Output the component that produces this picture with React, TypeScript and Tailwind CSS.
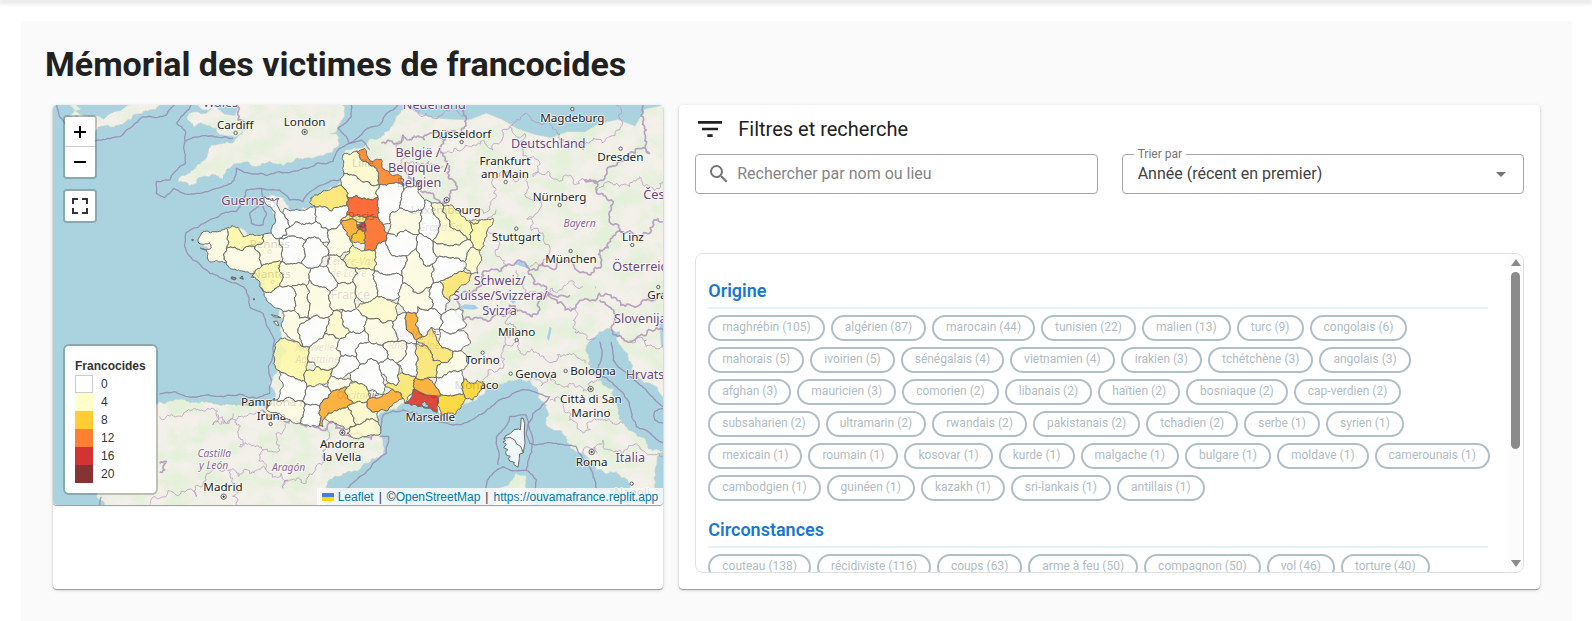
import React from "react";

type Pt = [number, number];

/* ---------- geometry helpers ---------- */

function parse(s: string): Pt[] {
  return s
    .trim()
    .split(/\s+/)
    .map((p) => p.split(",").map(Number) as Pt);
}

function hash(a: number, b: number): number {
  const v = Math.sin(a * 12.9898 + b * 78.233) * 43758.5453;
  return v - Math.floor(v) - 0.5;
}

/* Subdivides a segment with a displacement that is the same in both directions. */
function roughen(a: Pt, b: Pt, depth: number, amount: number): Pt[] {
  const dx = b[0] - a[0];
  const dy = b[1] - a[1];
  const len = Math.hypot(dx, dy);
  if (depth === 0 || len < 7) return [a];
  const sign = a[0] < b[0] || (a[0] === b[0] && a[1] < b[1]) ? 1 : -1;
  const off = hash(a[0] + b[0], a[1] + b[1]) * amount * sign;
  const m: Pt = [(a[0] + b[0]) / 2 - dy * off, (a[1] + b[1]) / 2 + dx * off];
  return [...roughen(a, m, depth - 1, amount), ...roughen(m, b, depth - 1, amount)];
}

function toPath(pts: Pt[], closed: boolean, amount: number): string {
  const out: Pt[] = [];
  const n = closed ? pts.length : pts.length - 1;
  for (let i = 0; i < n; i++) {
    out.push(...roughen(pts[i], pts[(i + 1) % pts.length], 4, amount));
  }
  if (!closed) out.push(pts[pts.length - 1]);
  return "M" + out.map((p) => p[0].toFixed(1) + " " + p[1].toFixed(1)).join("L") + (closed ? "Z" : "");
}

/* Merges nearby vertices and adds missing ones along shared edges. */
function weld(shapes: Pt[][], tol: number): Pt[][] {
  const nodes: Pt[] = [];
  const snap = (p: Pt): Pt => {
    let best: Pt | null = null;
    let bd = tol;
    for (const q of nodes) {
      const d = Math.hypot(p[0] - q[0], p[1] - q[1]);
      if (d < bd) {
        bd = d;
        best = q;
      }
    }
    if (best) return best;
    nodes.push(p);
    return p;
  };
  const snapped = shapes.map((s) => {
    const r = s.map(snap);
    return r.filter((p, i) => p !== r[(i + 1) % r.length]);
  });
  return snapped.map((s) => {
    const out: Pt[] = [];
    s.forEach((a, i) => {
      const b = s[(i + 1) % s.length];
      out.push(a);
      const dx = b[0] - a[0];
      const dy = b[1] - a[1];
      const l2 = dx * dx + dy * dy;
      nodes
        .filter((q) => !s.includes(q))
        .map((q) => ({ q, t: ((q[0] - a[0]) * dx + (q[1] - a[1]) * dy) / l2 }))
        .filter(({ q, t }) => t > 0.05 && t < 0.95 && Math.hypot(a[0] + dx * t - q[0], a[1] + dy * t - q[1]) < 9)
        .sort((u, v) => u.t - v.t)
        .forEach(({ q }) => out.push(q));
    });
    return out;
  });
}

/* ---------- départements ---------- */

const W = "#ffffff";
const C0 = "#fffde4";
const C1 = "#fffacb";
const C2 = "#fff9a6";
const Y = "#fde568";
const G = "#fdd422";
const O = "#ffa51c";
const D = "#ff7b15";
const R = "#ff4f14";

const departments: [string, string][] = [
  [D, "290,33 315,25 325,55 340,65 350,58 365,58 368,85 388,95 395,105 425,108 428,135 400,130 360,135 357,115 350,85 330,75 302,58"],
  [C1, "290,33 302,58 330,75 350,85 357,115 360,135 330,128 300,118 270,105 252,100 252,70 252,42"],
  [C0, "252,100 270,105 300,118 330,128 360,135 355,172 320,178 262,170 260,150 245,135"],
  [Y, "150,188 165,165 200,152 245,135 260,150 262,170 262,195 240,200 215,213 205,205 180,198"],
  [R, "262,170 320,178 355,172 355,232 320,232 262,225 262,195"],
  [W, "355,172 360,135 400,130 428,135 432,152 425,180 420,205 398,215 392,250 370,255 355,232"],
  [W, "432,152 470,140 480,125 475,155 495,180 495,200 485,210 450,215 420,205 425,180"],
  [C0, "398,215 420,205 450,215 485,210 485,240 480,280 455,280 440,270 410,290 385,280 392,250"],
  [W, "485,210 495,180 515,188 520,205 530,230 540,260 530,290 520,305 500,290 480,280 485,240"],
  [C1, "515,188 550,195 560,230 570,260 600,270 632,300 600,315 560,315 520,305 530,290 540,260 530,230"],
  [C2, "550,195 580,198 610,230 662,240 655,250 630,247 640,270 632,300 600,270 570,260 560,230"],
  [C2, "662,240 700,235 690,260 675,300 662,330 640,320 632,300 640,270 630,247"],
  [C1, "640,320 662,330 660,370 655,400 635,402 615,365"],
  [C0, "520,305 560,315 600,315 632,300 640,320 615,365 580,352 535,352 520,330"],
  [W, "480,280 500,290 520,305 520,330 535,352 518,372 500,380 480,345 470,325 470,300"],
  [W, "385,280 410,290 440,270 455,280 480,280 470,300 470,325 438,348 410,350 380,315"],
  ["#ff6216", "320,232 355,232 370,255 385,280 380,300 355,310 350,325 315,332 315,310 318,270"],
  [Y, "260,225 290,225 320,234 312,248 285,240 245,238"],
  [O, "245,238 285,240 292,255 298,267 278,285 272,302 262,285 250,260"],
  ["#fdbb13", "298,267 317,275 318,300 312,315 278,310 278,285"],
  [W, "165,198 205,205 215,213 240,200 262,195 260,225 245,238 235,260 205,270 185,262 170,230"],
  [W, "75,205 100,210 165,198 170,230 170,245 140,250 90,262 85,240 70,220"],
  [W, "15,170 25,178 58,175 55,200 70,220 85,240 90,262 78,268 82,285 62,295 42,290 48,240 30,200"],
  [W, "90,262 140,250 170,245 185,262 205,270 210,305 190,308 165,290 140,300 65,295 82,285 78,268"],
  [C0, "205,270 235,260 245,238 250,260 262,285 272,302 280,315 270,335 240,350 205,345 200,320 210,305"],
  [C2, "280,315 315,332 350,325 345,360 345,392 310,385 285,385 260,378 248,360 270,335"],
  [W, "350,325 355,310 380,300 385,315 410,350 438,348 435,380 428,408 380,405 345,392 345,360"],
  [C0, "438,348 470,325 480,345 500,380 518,372 515,410 520,430 490,455 460,455 430,430 428,408 435,380"],
  [W, "518,372 535,352 580,352 615,365 612,393 580,405 540,425 520,425 515,410"],
  [Y, "540,425 580,405 612,393 625,405 600,440 575,465 570,485 550,450"],
  [W, "520,425 540,425 550,450 570,485 560,515 545,525 515,505 508,470 515,440"],
  [W, "65,295 140,300 130,320 125,370 90,372 68,365 68,330"],
  [W, "140,300 165,290 190,308 200,320 205,345 180,378 155,385 125,370 130,320"],
  [C0, "10,285 35,280 65,295 68,330 68,365 35,370 5,380 0,340 -15,320 12,305"],
  [C2, "-100,265 -65,262 -50,290 -20,282 10,285 12,305 -15,320 -50,332 -100,325"],
  [C0, "-100,265 -135,275 -180,290 -182,310 -150,308 -145,324 -178,324 -155,342 -150,365 -130,360 -100,370 -108,345 -100,325"],
  [C0, "-100,325 -50,332 -15,320 0,340 5,380 -15,398 -70,390 -95,372 -108,345"],
  [C2, "5,380 35,370 68,365 60,390 68,420 60,437 35,458 0,440 -5,420 -25,412"],
  [C0, "68,365 90,372 125,370 155,385 150,420 140,438 95,440 60,437 68,420 60,390"],
  [W, "155,385 200,378 215,400 235,430 212,455 185,440 150,420"],
  [C0, "205,345 240,350 260,378 285,385 295,400 280,425 235,430 215,400 200,378"],
  [C0, "285,385 310,385 345,392 350,440 350,470 315,490 290,470 280,425 295,400"],
  [W, "345,392 380,405 428,408 430,430 420,450 420,470 380,478 350,470 350,440"],
  [C0, "430,430 460,455 490,455 512,448 508,470 515,505 475,500 470,520 440,518 415,490 420,470 420,450"],
  [C0, "235,430 280,425 290,470 290,505 250,508 225,512 210,500 212,455"],
  [W, "0,445 35,458 60,437 95,440 105,480 105,512 70,515 30,490"],
  [C0, "95,440 140,438 145,480 150,500 150,538 120,535 105,512 105,480"],
  [C0, "140,438 150,425 185,440 212,455 210,500 225,512 205,532 150,538 150,500 145,480"],
  [C0, "65,515 105,512 120,535 150,538 115,570 125,600 130,620 110,605 78,580 65,550"],
  [W, "125,550 150,538 205,532 200,565 175,600 150,622 130,620 125,600 115,570"],
  [C1, "205,532 225,512 245,520 250,555 270,575 240,598 195,582 200,565"],
  [W, "245,512 290,505 318,530 315,570 270,575 250,555 245,530"],
  [C1, "290,505 315,490 350,470 380,478 415,490 415,525 400,545 350,535 318,530"],
  [C0, "318,535 350,535 400,545 408,575 415,605 370,615 330,605 315,570"],
  [W, "400,545 415,525 440,518 440,565 470,600 470,612 440,608 415,605 408,575"],
  [O, "440,518 468,518 468,555 488,590 470,600 440,565"],
  [W, "470,520 475,500 515,505 545,525 540,570 515,562 488,590 468,555"],
  [W, "545,530 580,508 610,510 622,555 595,570 540,570"],
  [W, "540,570 595,570 625,585 632,610 605,632 570,630 535,605"],
  [Y, "470,600 488,590 515,562 535,605 570,630 575,655 545,668 520,662 515,640 495,615"],
  [Y, "470,612 495,615 515,640 520,662 545,668 530,690 530,712 500,715 468,712 475,660"],
  [W, "470,612 475,660 468,712 430,700 412,670 440,640 445,610"],
  [C0, "370,615 415,605 445,610 440,640 412,660 385,655"],
  [C0, "530,690 545,668 575,655 580,635 605,640 625,670 605,690 560,705 530,712"],
  [W, "530,712 560,705 605,690 612,715 605,735 612,762 545,765 532,745 525,735"],
  [G, "612,708 640,730 670,725 665,750 640,780 612,768 605,735"],
  [G, "535,767 600,762 618,775 605,800 585,825 545,825 533,795"],
  [O, "468,712 500,715 530,730 535,767 500,765 465,747"],
  [Y, "375,735 412,735 414,705 468,712 465,747 435,788 425,762 400,748"],
  [O, "322,800 330,775 370,765 400,748 425,762 430,775 360,812 330,808"],
  [W, "355,670 385,655 412,670 414,705 412,735 385,728 365,700"],
  [W, "270,700 300,675 335,655 355,670 365,700 375,735 370,765 325,752 275,720"],
  [W, "290,650 300,610 330,605 370,615 385,655 355,670 335,655 300,675"],
  [W, "240,598 270,575 315,570 330,605 300,610 290,650 245,648 230,625"],
  [C0, "150,622 175,600 195,582 240,598 230,625 245,648 220,685 175,680 145,662"],
  [C2, "62,595 85,600 130,620 150,630 145,662 140,690 135,722 100,710 60,693"],
  [W, "60,693 100,710 135,722 142,740 128,783 50,780"],
  [C2, "140,690 175,680 220,685 205,725 165,740 142,740 135,722"],
  [W, "220,685 245,648 290,650 300,675 270,700 245,715 215,708"],
  [C0, "215,708 245,715 275,720 262,742 215,757 205,740 205,725"],
  [W, "142,740 165,740 205,740 215,757 205,775 180,798 150,795 128,783"],
  [C0, "30,788 50,780 128,783 135,810 122,850 95,845 60,820 20,808"],
  [W, "128,783 150,795 180,798 178,820 185,830 178,858 150,860 122,850 135,810"],
  [O, "180,798 215,757 262,750 264,775 282,790 225,812 195,835 190,860 176,862 185,830 178,820"],
  [C2, "262,742 290,725 325,752 322,785 282,790 262,770"],
  [C1, "200,837 225,812 262,800 280,830 290,855 258,868 230,850"],
  [C1, "262,800 282,790 322,785 330,808 360,812 355,845 290,855 280,830"],
  [C1, "262,880 290,862 290,855 355,845 358,885 320,890"],
];

const shapes = weld(
  departments.map(([, s]) => parse(s)),
  11
);

/* ---------- base map ---------- */

const lands = [
  "60,15 95,25 60,48 100,55 110,80 135,97 200,75 250,45 300,30 330,15",
  "440,15 490,22 470,40 412,52 430,80 480,75 510,105 560,110 590,85 560,115 520,130 485,135 465,180 440,200 385,245 420,258 450,232 490,222 520,238 545,200 575,190 620,200 660,185 680,192 760,178 825,165 865,140 870,112 840,100 870,70 885,40 880,15",
  "1065,15 1040,50 1010,95 990,115 920,145 885,155 880,220 860,265 790,300 800,325 720,330 690,290 650,290 670,340 690,410 600,410 530,385 450,410 480,485 560,510 640,530 640,580 690,630 695,700 690,800 675,910 655,927 610,920 560,918 470,905 375,900 330,905 60,915 50,1000 150,1130 165,1215 840,1215 830,1160 880,1120 950,1090 1000,1035 985,1000 985,950 1065,905 1120,910 1160,930 1215,945 1280,900 1300,885 1380,840 1440,842 1480,905 1490,960 1550,1010 1600,1060 1640,1110 1700,1115 1740,1165 1790,1215 1842,1215 1842,1055 1770,1010 1720,970 1700,910 1650,840 1615,790 1610,740 1635,712 1710,695 1700,715 1722,750 1745,790 1785,850 1842,900 1842,15",
  "1332,1165 1360,1160 1400,1118 1430,1130 1440,1175 1440,1215 1330,1215",
];

const countryBorders = [
  "560,15 565,60 590,75",
  "995,130 1060,105 1100,112 1140,100 1185,120",
  "1240,15 1245,80 1190,95 1185,120 1180,160 1200,200 1215,270 1192,305 1175,320",
  "1060,200 1110,250 1150,280 1175,320",
  "1780,15 1785,80 1800,160 1790,150 1740,160 1680,200 1605,240 1640,275 1680,335 1725,400 1760,410 1800,400 1842,365",
  "1725,400 1650,450 1655,500 1600,515 1520,505 1440,510 1370,498 1300,515 1290,560 1225,630 1240,660",
  "1240,660 1330,650 1380,615 1430,640 1465,640 1490,590 1560,585",
  "1440,510 1490,560 1500,590 1600,600 1700,595 1780,600 1842,570",
  "1650,600 1700,650 1690,695 1760,715 1842,695",
  "640,930 700,960 770,980 810,985 880,985 900,1010 985,1005",
  "330,1090 350,1085 345,1110 330,1115",
];

const regionBorders = [
  "330,950 400,945 440,930 500,945 520,970 560,960 600,940 640,930",
  "560,960 565,1000 570,1040 640,1050 690,1050 720,970",
  "500,945 490,975 530,970 550,940",
  "640,1050 650,1110 700,1165 760,1150 800,1100 820,1050 825,985",
  "300,1215 330,1195 440,1190 470,1140 540,1110 600,1120 650,1110",
  "540,1110 570,1170 560,1215",
  "1100,15 1110,45 1180,40 1240,50",
  "1060,105 1040,140 1060,200 1120,190 1180,200",
  "1380,80 1430,40 1500,60 1530,120 1600,150 1680,110 1700,15",
  "1180,160 1260,140 1330,150 1380,80 1420,150 1450,230 1540,230 1605,240",
  "1280,330 1340,290 1350,220 1420,230 1460,300 1480,400 1440,500",
  "1340,330 1320,400 1350,470 1370,498",
  "1640,275 1700,250 1770,230 1842,240",
  "1400,510 1420,560 1480,580 1540,560 1600,560",
  "1360,745 1400,720 1430,760 1490,780 1560,760 1610,790",
  "1380,640 1400,690 1360,745 1300,840",
  "1440,842 1500,830 1560,850 1620,870 1650,840",
  "1500,900 1560,950 1600,1000 1660,960 1720,970",
  "1600,1060 1660,1020 1720,1060 1842,1070",
  "1560,620 1570,680 1620,720 1640,712",
  "1740,720 1790,740 1842,735",
];

const maritime = [
  "20,15 30,50 60,80 135,122 210,110 280,50 350,45 375,15",
  "425,15 380,70 408,95 408,190 360,240 320,245 320,280 345,293 372,265 420,283 470,275 500,265 545,250 560,205 610,222 690,215 760,205 850,185 870,145 900,130 935,120 960,150",
  "408,125 450,110 550,115",
  "905,15 905,50 865,85 900,130 990,75 1045,15",
  "870,240 830,250 790,270 760,305 720,300 690,270 635,265 590,270 560,335 480,360 408,400 405,440 430,480 480,520 540,545 590,570 600,620 640,640 660,690 675,720 660,880 620,895 520,890 440,892 375,875 330,882",
  "635,265 635,310 600,340 605,370 640,375 650,340 635,310",
  "150,1215 155,1190",
  "990,1010 1018,1010 1010,1060 930,1130 860,1180 830,1215",
  "990,1000 1000,945 1060,930 1140,950 1210,975 1300,940 1360,895 1440,870 1500,890 1450,940 1430,1000 1440,1030 1520,1030 1580,1040 1620,1100 1640,1165 1700,1170 1740,1215",
  "1345,1095 1340,1010 1380,950 1430,945 1445,1000 1430,1110 1360,1100 1320,1130 1310,1190",
  "1430,1110 1460,1140 1460,1215",
  "1650,725 1655,780 1640,820 1700,860 1740,920 1760,980 1842,1030",
  "1685,725 1690,780 1740,830 1790,870 1842,920",
  "1842,925 1815,935 1815,960 1842,970",
];

const landPaths = lands.map((s) => toPath(parse(s), true, 0.45));

type Label = { t: string; x: number; y: number; k?: "c" | "p" | "i"; a?: "start" };

const labels: Label[] = [
  { t: "Wales", x: 513, y: 20, k: "p" },
  { t: "Cardiff", x: 557, y: 87 },
  { t: "London", x: 765, y: 78 },
  { t: "Guernsey", x: 600, y: 315, k: "p" },
  { t: "Nederland", x: 1154, y: 27, k: "p" },
  { t: "Magdeburg", x: 1568, y: 65 },
  { t: "Düsseldorf", x: 1236, y: 113 },
  { t: "Deutschland", x: 1496, y: 143, k: "p" },
  { t: "België /", x: 1105, y: 170, k: "p" },
  { t: "Belgique /", x: 1106, y: 215, k: "p" },
  { t: "Belgien", x: 1108, y: 260, k: "p" },
  { t: "Frankfurt", x: 1366, y: 194 },
  { t: "am Main", x: 1366, y: 234 },
  { t: "Dresden", x: 1712, y: 182 },
  { t: "Česko", x: 1781, y: 296, k: "p", a: "start" },
  { t: "Nürnberg", x: 1530, y: 304 },
  { t: "Bayern", x: 1590, y: 380, k: "i" },
  { t: "Stuttgart", x: 1400, y: 422 },
  { t: "Linz", x: 1750, y: 422 },
  { t: "München", x: 1564, y: 489 },
  { t: "Österreich", x: 1688, y: 514, k: "p", a: "start" },
  { t: "Schweiz/", x: 1350, y: 554, k: "p" },
  { t: "Suisse/Svizzera/", x: 1352, y: 599, k: "p" },
  { t: "Svizra", x: 1350, y: 645, k: "p" },
  { t: "Graz", x: 1793, y: 596, a: "start" },
  { t: "Luxembourg", x: 1188, y: 342 },
  { t: "Slovenija", x: 1693, y: 669, k: "p", a: "start" },
  { t: "Milano", x: 1401, y: 708 },
  { t: "Torino", x: 1298, y: 793 },
  { t: "Genova", x: 1397, y: 834, a: "start" },
  { t: "Bologna", x: 1562, y: 825, a: "start" },
  { t: "Hrvatska", x: 1728, y: 838, k: "p", a: "start" },
  { t: "Monaco", x: 1281, y: 867 },
  { t: "Marseille", x: 1142, y: 962 },
  { t: "Città di San", x: 1624, y: 909 },
  { t: "Marino", x: 1624, y: 950 },
  { t: "Roma", x: 1626, y: 1098 },
  { t: "Italia", x: 1742, y: 1086, k: "p" },
  { t: "Napoli", x: 1747, y: 1187 },
  { t: "Pamplona /", x: 574, y: 918, a: "start" },
  { t: "Iruña", x: 621, y: 960, a: "start" },
  { t: "Castilla", x: 494, y: 1070, k: "i" },
  { t: "y León", x: 492, y: 1106, k: "i" },
  { t: "Aragón", x: 717, y: 1113, k: "i" },
  { t: "Madrid", x: 520, y: 1173 },
  { t: "Andorra", x: 878, y: 1044 },
  { t: "la Vella", x: 877, y: 1084 },
  { t: "Rennes", x: 660, y: 444 },
  { t: "Nantes", x: 665, y: 534 },
  { t: "Paris", x: 935, y: 361 },
  { t: "Lille", x: 940, y: 202 },
  { t: "Centre-Val", x: 900, y: 495, k: "i" },
  { t: "de Loire", x: 895, y: 531, k: "i" },
  { t: "France", x: 902, y: 598, k: "p" },
  { t: "Grand Est", x: 1173, y: 393, k: "i" },
  { t: "Nouvelle-", x: 800, y: 754, k: "i" },
  { t: "Aquitaine", x: 803, y: 790, k: "i" },
  { t: "Auvergne-", x: 1100, y: 710, k: "i" },
  { t: "Rhône-Alpes", x: 1100, y: 746, k: "i" },
  { t: "Occitanie", x: 925, y: 898, k: "i" },
];

const labelClass = {
  c: "text-[35px] fill-[#222222] stroke-white/80",
  p: "text-[38px] fill-[#6a4478] stroke-white/80",
  i: "text-[31px] italic fill-[#8c6597] stroke-white/80",
};

const towns: Pt[] = [
  [558, 99], [1568, 27], [1236, 126], [1368, 246], [1713, 146], [1530, 315], [1400, 386], [1748, 435],
  [1563, 453], [1826, 561], [1401, 720], [1299, 758], [1383, 821], [1548, 813], [1746, 1151], [663, 972],
  [660, 455], [669, 546],
];
const capitals: Pt[] = [[765, 96], [1191, 300], [1623, 867], [1626, 1056], [522, 1190], [878, 998]];

function FranceMap() {
  return (
    <svg
      viewBox="9 15 1833 1200"
      preserveAspectRatio="xMidYMid slice"
      role="img"
      aria-label="Carte des francocides par département"
      className="block h-[400px] w-full rounded bg-[#aad3df]"
    >
      <defs>
        <filter id="relief" x="0" y="0" width="100%" height="100%">
          <feTurbulence type="fractalNoise" baseFrequency="0.014 0.018" numOctaves="6" seed="8" />
          <feColorMatrix type="matrix" values="0 0 0 0 0.7  0 0 0 0 0.87  0 0 0 0 0.62  3.2 0 0 0 -1.25" />
        </filter>
        <clipPath id="land">
          {landPaths.map((d, i) => (
            <path key={i} d={d} />
          ))}
        </clipPath>
      </defs>
      <g className="fill-[#f3f0ea] stroke-[#c3d3d2] stroke-2">
        {landPaths.map((d, i) => (
          <path key={i} d={d} />
        ))}
      </g>
      <g clipPath="url(#land)">
        <rect x="9" y="15" width="1833" height="1200" filter="url(#relief)" opacity="0.6" />
      </g>
      <g className="fill-[#a6cfe8]">
        <path d="M1225 625l20-12 30 2 12 10-15 4-28-2zM1385 590l12-4 4 14-10 12-8-8zM1390 490l20-8 30 16-6 6-22-6zM1500 680l6 4-8 40-6-10zM1310 615l14 12-4 6-12-10zM1635 555l6 8-4 4z" />
      </g>
      <g fill="none" className="stroke-[#a281b0]/70 stroke-[5]" strokeLinejoin="round">
        {countryBorders.map((s, i) => (
          <path key={i} d={toPath(parse(s), false, 0.7)} />
        ))}
      </g>
      <g fill="none" className="stroke-[#b393bf]/70 stroke-[3]" strokeLinejoin="round">
        {regionBorders.map((s, i) => (
          <path key={i} d={toPath(parse(s), false, 0.8)} />
        ))}
      </g>
      <g fill="none" className="stroke-[#9486ae]/80 stroke-[4]" strokeLinejoin="round">
        {maritime.map((s, i) => (
          <path key={i} d={toPath(parse(s), false, 0.2)} />
        ))}
      </g>
      <g className="fill-white stroke-[#444444] stroke-[2.5]">
        {towns.map(([x, y]) => (
          <circle key={x} cx={x} cy={y} r="5" />
        ))}
        {capitals.map(([x, y]) => (
          <g key={x}>
            <circle cx={x} cy={y} r="8" />
            <circle cx={x} cy={y} r="2.5" className="fill-[#444444]" />
          </g>
        ))}
      </g>
      <g className="font-['Noto_Sans',sans-serif]" strokeWidth="5" strokeLinejoin="round" style={{ paintOrder: "stroke" }}>
        {labels.map((l) => (
          <text key={l.t} x={l.x} y={l.y} textAnchor={l.a ?? "middle"} className={labelClass[l.k ?? "c"]}>
            {l.t}
          </text>
        ))}
      </g>
      <g transform="translate(630 120)" className="stroke-[#6a6a6a] stroke-3" fillOpacity="0.82" strokeLinejoin="round">
        {shapes.map((pts, i) => (
          <path key={i} d={toPath(pts, true, 0.42)} fill={departments[i][0]} />
        ))}
        <path d="M303 249l12-2 5 12-12 6z" fill="#b3222a" />
        <path d="M292 255l11-4 5 12-8 6-8-6z" fill="#d7302f" />
        <path d="M300 266l8-4 11 2 1 9-13 1z" fill="#e5432b" />
        <path d="M298 257l7-2 3 6-7 3z" fill="#5a2a35" />
        <path
          d="M435 790l14-9 8-12 4-22 39 18 35 3 2 20-5 8 1 21-12-3-8-9-20-1-6-6-12 2-8-7-12 3-6-5zM485 792l12-9 3 10 8 3-5 7-12-3z"
          fill="#d92316"
          fillRule="evenodd"
        />
        <path
          d="M785 834l6 1 4 16-1 28 2 30-5 28-8-14-12-7-6-12-14-8-18 2 4-10 16-8 10-11 14-2 5 3z"
          fill="#ffffff"
        />
        <path
          d="M733 895l18-3 14 8 6 12 12 7 8 20-11 3-1 14-4 26-13-9 2-6-14-4-4-8 6-6-12-4-2-10 7-6-13-6 8-10-10-7 8-4z"
          fill="#ffffff"
        />
        <path d="M35 524l18 4 10 5-22-3zM42 545l10-2 6 14-8-2z" fill="#fffde4" />
        <path d="M-203 297l5 3-5 2zM-84 410l14 4-4 6-12-4zM-60 414l8-6 3 10zM-18 475l4 3-4 2z" fill="#777777" />
      </g>
    </svg>
  );
}

/* ---------- map overlays ---------- */

const legend = [
  { value: 0, color: "bg-white border border-[#cccccc]" },
  { value: 4, color: "bg-[#ffffcc]" },
  { value: 8, color: "bg-[#ffcc33]" },
  { value: 12, color: "bg-[#ff8033]" },
  { value: 16, color: "bg-[#d43333]" },
  { value: 20, color: "bg-[#853333]" },
];

function MapCard() {
  return (
    <section className="h-full rounded bg-white shadow-[0_1px_1px_rgba(0,0,0,0.35),0_1px_4px_rgba(0,0,0,0.14)]">
      <div className="relative overflow-hidden rounded font-['Liberation_Sans',Arial,sans-serif] text-xs shadow-[0_1px_1px_rgba(0,0,0,0.4)]">
        <FranceMap />
        <div className="absolute top-2.5 left-2.5 flex flex-col gap-2.5">
          <div className="flex flex-col rounded border-2 border-black/20 bg-clip-padding">
            <button
              aria-label="Zoom avant"
              className="flex size-[30px] items-center justify-center rounded-t-xs border-b border-[#cccccc] bg-white"
            >
              <svg viewBox="0 0 12 12" className="size-3" stroke="black" strokeWidth="2">
                <path d="M6 0v12M0 6h12" />
              </svg>
            </button>
            <button aria-label="Zoom arrière" className="flex size-[30px] items-center justify-center rounded-b-xs bg-white">
              <svg viewBox="0 0 12 12" className="size-3" stroke="black" strokeWidth="2">
                <path d="M0 6h12" />
              </svg>
            </button>
          </div>
          <div className="rounded border-2 border-black/20 bg-clip-padding">
            <button aria-label="Plein écran" className="flex size-[30px] items-center justify-center rounded-xs bg-white">
              <svg viewBox="0 0 16 16" className="size-4" fill="none" stroke="#333333" strokeWidth="2">
                <path d="M1 6V1h5M10 1h5v5M15 10v5h-5M6 15H1v-5" />
              </svg>
            </button>
          </div>
        </div>
        <div className="absolute bottom-2.5 left-2.5 rounded-md border-2 border-black/20 bg-white bg-clip-padding px-2.5 pt-[11px] pb-2.5 text-[#333333]">
          <h2 className="text-xs leading-[18px] font-bold">Francocides</h2>
          <ul>
            {legend.map((l) => (
              <li key={l.value} className="flex h-[18px] items-center gap-2">
                <span className={`size-[18px] ${l.color}`} />
                {l.value}
              </li>
            ))}
          </ul>
        </div>
        <div className="absolute right-0 bottom-0 flex h-[17px] items-center gap-[5px] bg-white/80 px-[5px] whitespace-nowrap text-[#333333]">
          <a href="https://leafletjs.com" className="flex items-center gap-1 text-[#0078a8]">
            <svg viewBox="0 0 12 8" className="h-2 w-3">
              <path fill="#4c7be1" d="M0 0h12v4H0z" />
              <path fill="#ffd500" d="M0 4h12v4H0z" />
            </svg>
            Leaflet
          </a>
          <span>|</span>
          <span>
            ©
            <a href="https://www.openstreetmap.org/copyright" className="text-[#0078a8]">
              OpenStreetMap
            </a>
          </span>
          <span>|</span>
          <a href="https://ouvamafrance.replit.app" className="text-[#0078a8]">
            https://ouvamafrance.replit.app
          </a>
        </div>
      </div>
    </section>
  );
}

/* ---------- filters ---------- */

const groups: { title: string; chips: [string, number][] }[] = [
  {
    title: "Origine",
    chips: [
      ["maghrébin", 105], ["algérien", 87], ["marocain", 44], ["tunisien", 22], ["malien", 13], ["turc", 9], ["congolais", 6],
      ["mahorais", 5], ["ivoirien", 5], ["sénégalais", 4], ["vietnamien", 4], ["irakien", 3], ["tchétchène", 3], ["angolais", 3],
      ["afghan", 3], ["mauricien", 3], ["comorien", 2], ["libanais", 2], ["haïtien", 2], ["bosniaque", 2], ["cap-verdien", 2],
      ["subsaharien", 2], ["ultramarin", 2], ["rwandais", 2], ["pakistanais", 2], ["tchadien", 2], ["serbe", 1], ["syrien", 1],
      ["mexicain", 1], ["roumain", 1], ["kosovar", 1], ["kurde", 1], ["malgache", 1], ["bulgare", 1], ["moldave", 1], ["camerounais", 1],
      ["cambodgien", 1], ["guinéen", 1], ["kazakh", 1], ["sri-lankais", 1], ["antillais", 1],
    ],
  },
  {
    title: "Circonstances",
    chips: [
      ["couteau", 138], ["récidiviste", 116], ["coups", 63], ["arme à feu", 50], ["compagnon", 50], ["vol", 46], ["torture", 40],
    ],
  },
];

function FilterCard() {
  return (
    <section className="flex h-full flex-col rounded bg-white p-4 pt-2 shadow-[0_1px_1px_rgba(0,0,0,0.35),0_1px_4px_rgba(0,0,0,0.14)]">
      <h2 className="flex h-8 items-center gap-4 pl-[3px] text-xl text-[#212121]">
        <svg viewBox="3 6 18 12" className="h-4 w-6 fill-[#212121]">
          <path d="M10,18H14V16H10V18M3,6V8H21V6H3M6,13H18V11H6V13Z" />
        </svg>
        Filtres et recherche
      </h2>
      <div className="mt-[9px] grid grid-cols-2 gap-6">
        <label className="flex h-10 items-center gap-1.5 rounded border border-[#a6a6a6] pr-3 pl-[11px]">
          <svg viewBox="0 0 24 24" className="size-6 shrink-0 fill-[#757575]">
            <path d="M9.5,3A6.5,6.5 0 0,1 16,9.5C16,11.11 15.41,12.59 14.44,13.73L14.71,14H15.5L20.5,19L19,20.5L14,15.5V14.71L13.73,14.44C12.59,15.41 11.11,16 9.5,16A6.5,6.5 0 0,1 3,9.5A6.5,6.5 0 0,1 9.5,3M9.5,5C7,5 5,7 5,9.5C5,12 7,14 9.5,14C12,14 14,12 14,9.5C14,7 12,5 9.5,5Z" />
          </svg>
          <span className="sr-only">Recherche</span>
          <input
            type="text"
            placeholder="Rechercher par nom ou lieu"
            className="w-full min-w-0 bg-transparent text-base outline-none placeholder:text-[#858585]"
          />
        </label>
        <div className="relative">
          <label htmlFor="sort" className="absolute -top-2 left-3 bg-white px-1 text-xs text-[#757575]">
            Trier par
          </label>
          <select
            id="sort"
            className="h-10 w-full appearance-none rounded border border-[#a6a6a6] bg-transparent px-[15px] text-base text-[#424242]"
          >
            <option>Année (récent en premier)</option>
            <option>Année (ancien en premier)</option>
          </select>
          <svg viewBox="0 0 10 5" className="pointer-events-none absolute top-[18px] right-[18px] h-[5px] w-2.5 fill-[#757575]">
            <path d="M0 0h10L5 5z" />
          </svg>
        </div>
      </div>
      <div className="mt-[59px] flex h-80 overflow-hidden rounded-lg border border-[#e0e0e0]">
        <div className="min-w-0 flex-1 overflow-y-auto pt-[25px] pr-5 pl-3 [scrollbar-width:none]">
          {groups.map((g) => (
            <div key={g.title} className="mb-[17px]">
              <h3 className="mb-1.5 border-b-2 border-[#e3f2fd] pb-1 text-lg leading-6 font-semibold text-[#1976d2]">{g.title}</h3>
              <div className="-mr-2 flex flex-wrap gap-1.5">
                {g.chips.map(([name, count]) => (
                  <button
                    key={name}
                    className="h-[26px] rounded-full border-2 border-[#b0bec5] px-3 pb-0.5 text-xs leading-5 whitespace-nowrap text-[#b0bcc2]"
                  >
                    {name} ({count})
                  </button>
                ))}
              </div>
            </div>
          ))}
        </div>
        <div aria-hidden="true" className="flex w-[15px] shrink-0 flex-col items-center bg-[#fcfcfc] pt-[5px] pb-[5px]">
          <svg viewBox="0 0 10 7" className="h-[7px] w-2.5 fill-[#8b8b8b]">
            <path d="M5 0l5 7H0z" />
          </svg>
          <div className="mt-1.5 h-[177px] w-[9px] rounded-full bg-[#8b8b8b]" />
          <svg viewBox="0 0 10 7" className="mt-auto h-[7px] w-2.5 fill-[#8b8b8b]">
            <path d="M5 7L0 0h10z" />
          </svg>
        </div>
      </div>
    </section>
  );
}

export default function App() {
  return (
    <div className="min-h-screen bg-white font-[Roboto,sans-serif] text-[#212121]">
      <div className="h-0 shadow-[0_1px_5px_1px_rgba(0,0,0,0.25)]" />
      <main className="pt-[21px] pr-5 pl-[21px]">
        <div className="min-h-[600px] bg-[#fafafa] p-6">
          <h1 className="text-[34px] leading-[38px] font-bold">Mémorial des victimes de francocides</h1>
          <div className="mt-[22px] grid grid-cols-12 gap-4 px-2">
            <div className="col-span-5">
              <MapCard />
            </div>
            <div className="col-span-7">
              <FilterCard />
            </div>
          </div>
        </div>
      </main>
    </div>
  );
}
